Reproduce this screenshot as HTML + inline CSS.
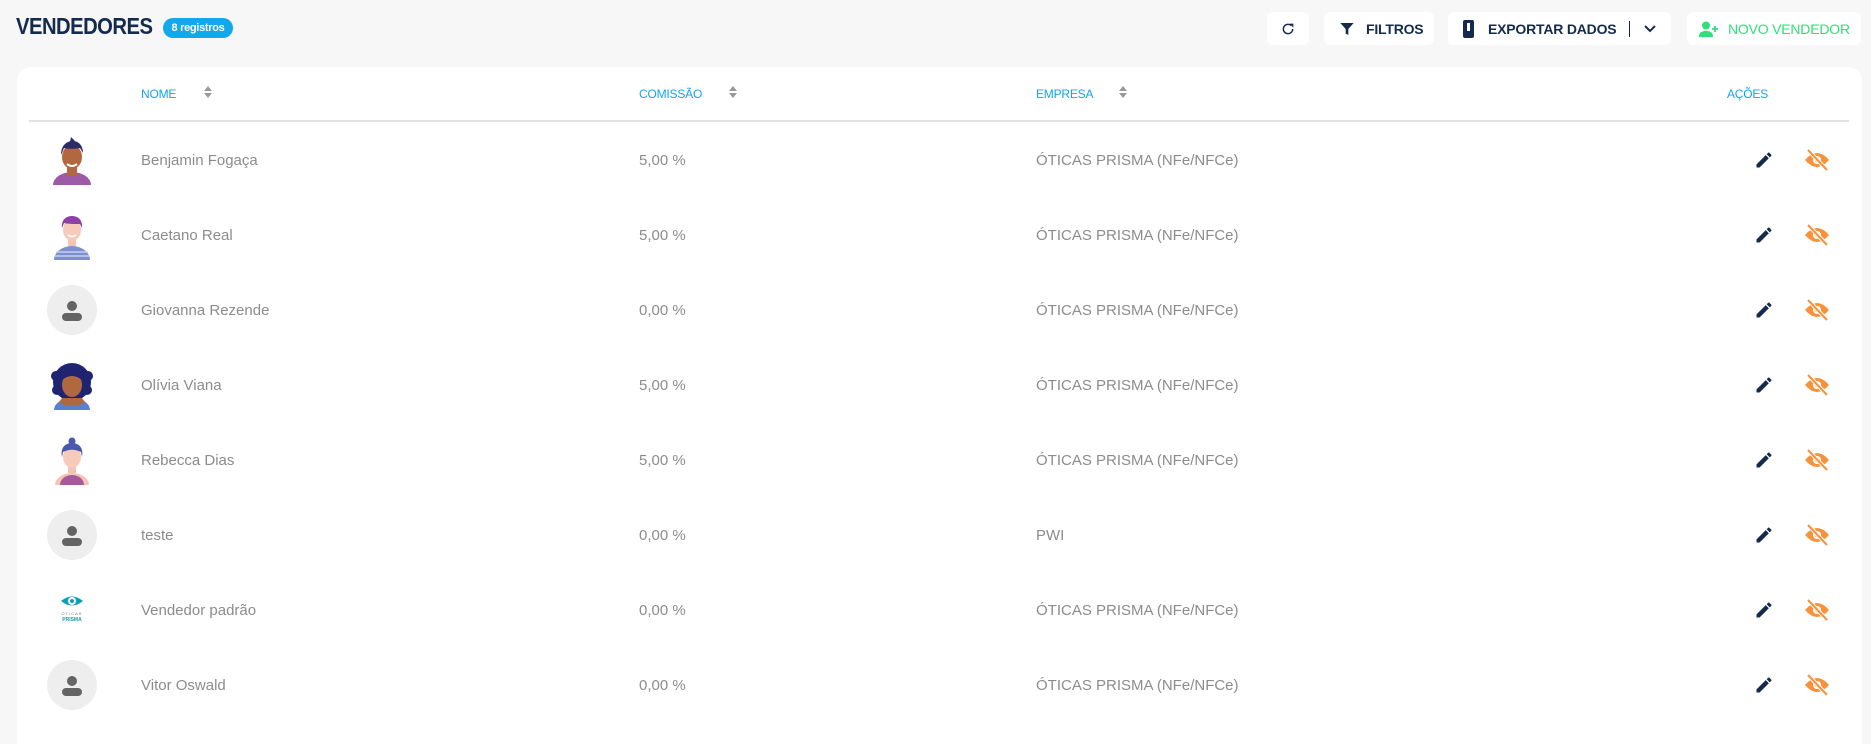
<!DOCTYPE html>
<html><head><meta charset="utf-8">
<style>
*{margin:0;padding:0;box-sizing:border-box}
html{width:1871px;height:744px;overflow:hidden}
body{width:1871px;height:744px;background:#f7f7f7;font-family:"Liberation Sans",sans-serif;position:relative;overflow:hidden}
.title{position:absolute;left:16px;top:13px;font-size:23px;font-weight:bold;color:#142b4d;letter-spacing:-0.6px;transform:scaleX(0.88);transform-origin:left top}
.badge{position:absolute;left:163px;top:18px;width:70px;height:20px;border-radius:10px;background:#11a8ec;color:#fff;font-size:11px;font-weight:bold;text-align:center;line-height:20px;letter-spacing:-0.3px}
.btn{position:absolute;top:12px;height:33px;background:#fff;border-radius:6px;display:flex;align-items:center;font-size:14px;font-weight:bold;color:#142b4d;letter-spacing:-0.2px}
.card{position:absolute;left:17px;top:67px;width:1845px;bottom:-30px;background:#fff;border-radius:14px}
.th{position:absolute;top:87px;font-size:12px;color:#14a4ea;letter-spacing:-0.2px}
.sort{position:absolute;top:85px}
.line{position:absolute;left:29px;top:120px;width:1820px;height:2px;background:#e2e2e2}
.row{position:absolute;left:0;width:1871px;height:75px}
.row .t{position:absolute;top:29px;font-size:15px;color:#8c8c8c}
.av{position:absolute;left:47px;top:12px;width:50px;height:50px}
.ed{position:absolute;left:1754px;top:27px}
.ey{position:absolute;left:1804px;top:26px}
</style></head><body>
<div class="title">VENDEDORES</div>
<div class="badge">8 registros</div>

<div class="btn" style="left:1267px;width:42px;justify-content:center">
<svg width="16" height="16" viewBox="0 0 24 24"><path d="M19 12a7 7 0 1 1-2.2-5.1" fill="none" stroke="#142b4d" stroke-width="2.2"/><path d="M14 4h6v6z" fill="#142b4d"/></svg></div>
<div class="btn" style="left:1324px;width:110px;padding-left:15px">
<svg width="16" height="16" viewBox="0 0 24 24" style="margin-right:11px"><path d="M2 3h20l-8 9v9l-4-2v-7z" fill="#142b4d"/></svg>FILTROS</div>
<div class="btn" style="left:1448px;width:223px;padding-left:15px">
<svg width="11" height="18" viewBox="0 0 11 18" style="margin-right:14px"><rect width="11" height="18" rx="2" fill="#142b4d"/><rect x="4" y="3" width="3" height="8" fill="#fff"/></svg>EXPORTAR DADOS<span style="display:inline-block;width:1px;height:16px;background:#142b4d;margin:0 13px 0 13px"></span>
<svg width="14" height="10" viewBox="0 0 14 10"><path d="M2 2l5 5 5-5" fill="none" stroke="#142b4d" stroke-width="2"/></svg></div>
<div class="btn" style="left:1687px;width:174px;padding-left:12px;color:#2fe07a;font-weight:normal">
<svg width="20" height="16" viewBox="0 0 20 16" style="margin-right:9px"><circle cx="7" cy="4.5" r="4" fill="#2fe07a"/><path d="M0 16c0-5 3-6 7-6s7 1 7 6z" fill="#2fe07a"/><path d="M16 5v6M13 8h6" stroke="#2fe07a" stroke-width="1.8"/></svg>NOVO VENDEDOR</div>

<div class="card"></div>
<div class="th" style="left:141px">NOME</div>
<div class="th" style="left:639px">COMISSÃO</div>
<div class="th" style="left:1036px">EMPRESA</div>
<div class="th" style="left:1727px">AÇÕES</div>
<svg class="sort" style="left:203px" width="10" height="14" viewBox="0 0 10 14"><path d="M1 6l4-5 4 5zM1 8l4 5 4-5z" fill="#9a9a9a"/></svg>
<svg class="sort" style="left:728px" width="10" height="14" viewBox="0 0 10 14"><path d="M1 6l4-5 4 5zM1 8l4 5 4-5z" fill="#9a9a9a"/></svg>
<svg class="sort" style="left:1118px" width="10" height="14" viewBox="0 0 10 14"><path d="M1 6l4-5 4 5zM1 8l4 5 4-5z" fill="#9a9a9a"/></svg>
<div class="line"></div>

<div class="row" style="top:123px">
<svg class="av" viewBox="0 0 50 50"><path d="M6 50a19 13 0 0 1 38 0z" fill="#9d5aa6"/><rect x="20" y="30" width="10" height="10" fill="#b3673f"/><ellipse cx="25" cy="22" rx="10" ry="12" fill="#b3673f"/><path d="M14 20c0-10 6-14 12-14s10 5 10 12l-3-5c-5 1-12 1-16 0z" fill="#2b2a6a"/><path d="M24 2l4 4-5 1z" fill="#2b2a6a"/><path d="M20 29q5 4 10 0" stroke="#fff" stroke-width="2" fill="none"/></svg>
<div class="t" style="left:141px">Benjamin Fogaça</div><div class="t" style="left:639px">5,00 %</div><div class="t" style="left:1036px">ÓTICAS PRISMA (NFe/NFCe)</div>
<svg class="ed" width="20" height="20" viewBox="0 0 24 24"><path d="M3 17.3V21h3.7L17.8 9.9l-3.7-3.7zM20.7 7c.4-.4.4-1 0-1.4l-2.3-2.3c-.4-.4-1-.4-1.4 0l-1.8 1.8 3.7 3.7z" fill="#142b4d"/></svg>
<svg class="ey" width="26" height="22" viewBox="0 0 26 22"><path d="M1 11q12-14 24 0q-12 14-24 0z" fill="#f7923b"/><circle cx="13" cy="11" r="4" fill="#fff"/><circle cx="13" cy="11" r="2.2" fill="#f7923b"/><path d="M4 1l19 20" stroke="#fff" stroke-width="4"/><path d="M4 1l19 20" stroke="#f7923b" stroke-width="2"/></svg>
</div>

<div class="row" style="top:198px">
<svg class="av" viewBox="0 0 50 50"><path d="M7 50a18 14 0 0 1 36 0z" fill="#7d8fd0"/><path d="M9 42h32M8 46h34" stroke="#c6d0f0" stroke-width="1.5"/><rect x="21" y="28" width="8" height="8" fill="#f4c2b0"/><ellipse cx="25" cy="20" rx="9" ry="11" fill="#f7cbbb"/><path d="M15 18c-1-9 5-12 10-12s11 3 10 12l-2-4c-5 0-12 0-16-1z" fill="#8f3fa6"/><path d="M21 25q4 3 8 0" stroke="#fff" stroke-width="1.5" fill="none"/></svg>
<div class="t" style="left:141px">Caetano Real</div><div class="t" style="left:639px">5,00 %</div><div class="t" style="left:1036px">ÓTICAS PRISMA (NFe/NFCe)</div>
<svg class="ed" width="20" height="20" viewBox="0 0 24 24"><path d="M3 17.3V21h3.7L17.8 9.9l-3.7-3.7zM20.7 7c.4-.4.4-1 0-1.4l-2.3-2.3c-.4-.4-1-.4-1.4 0l-1.8 1.8 3.7 3.7z" fill="#142b4d"/></svg>
<svg class="ey" width="26" height="22" viewBox="0 0 26 22"><path d="M1 11q12-14 24 0q-12 14-24 0z" fill="#f7923b"/><circle cx="13" cy="11" r="4" fill="#fff"/><circle cx="13" cy="11" r="2.2" fill="#f7923b"/><path d="M4 1l19 20" stroke="#fff" stroke-width="4"/><path d="M4 1l19 20" stroke="#f7923b" stroke-width="2"/></svg>
</div>

<div class="row" style="top:273px">
<svg class="av" viewBox="0 0 50 50"><circle cx="25" cy="25" r="25" fill="#eeeeee"/><circle cx="25" cy="21" r="5" fill="#646464"/><rect x="15" y="28" width="20" height="8" rx="4" fill="#646464"/></svg>
<div class="t" style="left:141px">Giovanna Rezende</div><div class="t" style="left:639px">0,00 %</div><div class="t" style="left:1036px">ÓTICAS PRISMA (NFe/NFCe)</div>
<svg class="ed" width="20" height="20" viewBox="0 0 24 24"><path d="M3 17.3V21h3.7L17.8 9.9l-3.7-3.7zM20.7 7c.4-.4.4-1 0-1.4l-2.3-2.3c-.4-.4-1-.4-1.4 0l-1.8 1.8 3.7 3.7z" fill="#142b4d"/></svg>
<svg class="ey" width="26" height="22" viewBox="0 0 26 22"><path d="M1 11q12-14 24 0q-12 14-24 0z" fill="#f7923b"/><circle cx="13" cy="11" r="4" fill="#fff"/><circle cx="13" cy="11" r="2.2" fill="#f7923b"/><path d="M4 1l19 20" stroke="#fff" stroke-width="4"/><path d="M4 1l19 20" stroke="#f7923b" stroke-width="2"/></svg>
</div>

<div class="row" style="top:348px">
<svg class="av" viewBox="0 0 50 50"><circle cx="25" cy="22" r="19" fill="#1f2370"/><circle cx="9" cy="16" r="5" fill="#1f2370"/><circle cx="41" cy="16" r="5" fill="#1f2370"/><circle cx="10" cy="30" r="5" fill="#1f2370"/><circle cx="40" cy="30" r="5" fill="#1f2370"/><path d="M7 50a18 12 0 0 1 36 0z" fill="#5d7ec8"/><path d="M12 42q13 8 26 0l-3-4h-20z" fill="#b0683e"/><ellipse cx="25" cy="25" rx="10" ry="12" fill="#b0683e"/><path d="M15 20q10-8 20 0q0-10-10-10t-10 10z" fill="#1f2370"/></svg>
<div class="t" style="left:141px">Olívia Viana</div><div class="t" style="left:639px">5,00 %</div><div class="t" style="left:1036px">ÓTICAS PRISMA (NFe/NFCe)</div>
<svg class="ed" width="20" height="20" viewBox="0 0 24 24"><path d="M3 17.3V21h3.7L17.8 9.9l-3.7-3.7zM20.7 7c.4-.4.4-1 0-1.4l-2.3-2.3c-.4-.4-1-.4-1.4 0l-1.8 1.8 3.7 3.7z" fill="#142b4d"/></svg>
<svg class="ey" width="26" height="22" viewBox="0 0 26 22"><path d="M1 11q12-14 24 0q-12 14-24 0z" fill="#f7923b"/><circle cx="13" cy="11" r="4" fill="#fff"/><circle cx="13" cy="11" r="2.2" fill="#f7923b"/><path d="M4 1l19 20" stroke="#fff" stroke-width="4"/><path d="M4 1l19 20" stroke="#f7923b" stroke-width="2"/></svg>
</div>

<div class="row" style="top:423px">
<svg class="av" viewBox="0 0 50 50"><path d="M8 50a17 12 0 0 1 34 0z" fill="#f6c3b4"/><path d="M13 50a12 10 0 0 1 24 0z" fill="#a35b9c"/><rect x="21" y="30" width="8" height="8" fill="#f4c2b0"/><ellipse cx="25" cy="22" rx="9" ry="11" fill="#f7cbbb"/><circle cx="25" cy="6" r="3.5" fill="#4b58ad"/><path d="M15 22c-2-10 4-14 10-14s12 4 10 14l-1-5c-6-3-12-3-18 0z" fill="#4b58ad"/></svg>
<div class="t" style="left:141px">Rebecca Dias</div><div class="t" style="left:639px">5,00 %</div><div class="t" style="left:1036px">ÓTICAS PRISMA (NFe/NFCe)</div>
<svg class="ed" width="20" height="20" viewBox="0 0 24 24"><path d="M3 17.3V21h3.7L17.8 9.9l-3.7-3.7zM20.7 7c.4-.4.4-1 0-1.4l-2.3-2.3c-.4-.4-1-.4-1.4 0l-1.8 1.8 3.7 3.7z" fill="#142b4d"/></svg>
<svg class="ey" width="26" height="22" viewBox="0 0 26 22"><path d="M1 11q12-14 24 0q-12 14-24 0z" fill="#f7923b"/><circle cx="13" cy="11" r="4" fill="#fff"/><circle cx="13" cy="11" r="2.2" fill="#f7923b"/><path d="M4 1l19 20" stroke="#fff" stroke-width="4"/><path d="M4 1l19 20" stroke="#f7923b" stroke-width="2"/></svg>
</div>

<div class="row" style="top:498px">
<svg class="av" viewBox="0 0 50 50"><circle cx="25" cy="25" r="25" fill="#eeeeee"/><circle cx="25" cy="21" r="5" fill="#646464"/><rect x="15" y="28" width="20" height="8" rx="4" fill="#646464"/></svg>
<div class="t" style="left:141px">teste</div><div class="t" style="left:639px">0,00 %</div><div class="t" style="left:1036px">PWI</div>
<svg class="ed" width="20" height="20" viewBox="0 0 24 24"><path d="M3 17.3V21h3.7L17.8 9.9l-3.7-3.7zM20.7 7c.4-.4.4-1 0-1.4l-2.3-2.3c-.4-.4-1-.4-1.4 0l-1.8 1.8 3.7 3.7z" fill="#142b4d"/></svg>
<svg class="ey" width="26" height="22" viewBox="0 0 26 22"><path d="M1 11q12-14 24 0q-12 14-24 0z" fill="#f7923b"/><circle cx="13" cy="11" r="4" fill="#fff"/><circle cx="13" cy="11" r="2.2" fill="#f7923b"/><path d="M4 1l19 20" stroke="#fff" stroke-width="4"/><path d="M4 1l19 20" stroke="#f7923b" stroke-width="2"/></svg>
</div>

<div class="row" style="top:573px">
<svg class="av" viewBox="0 0 50 50"><path d="M14 16q11-9 22 0q-11 9-22 0z" fill="#0e9fb5"/><circle cx="25" cy="16" r="4" fill="#fff"/><circle cx="25" cy="16" r="2" fill="#0e9fb5"/><text x="25" y="30" font-size="4" text-anchor="middle" fill="#777" font-family="Liberation Sans" letter-spacing="1">ÓTICAS</text><text x="25" y="36" font-size="5" text-anchor="middle" fill="#0e9fb5" font-weight="bold" font-family="Liberation Sans">PRISMA</text></svg>
<div class="t" style="left:141px">Vendedor padrão</div><div class="t" style="left:639px">0,00 %</div><div class="t" style="left:1036px">ÓTICAS PRISMA (NFe/NFCe)</div>
<svg class="ed" width="20" height="20" viewBox="0 0 24 24"><path d="M3 17.3V21h3.7L17.8 9.9l-3.7-3.7zM20.7 7c.4-.4.4-1 0-1.4l-2.3-2.3c-.4-.4-1-.4-1.4 0l-1.8 1.8 3.7 3.7z" fill="#142b4d"/></svg>
<svg class="ey" width="26" height="22" viewBox="0 0 26 22"><path d="M1 11q12-14 24 0q-12 14-24 0z" fill="#f7923b"/><circle cx="13" cy="11" r="4" fill="#fff"/><circle cx="13" cy="11" r="2.2" fill="#f7923b"/><path d="M4 1l19 20" stroke="#fff" stroke-width="4"/><path d="M4 1l19 20" stroke="#f7923b" stroke-width="2"/></svg>
</div>

<div class="row" style="top:648px">
<svg class="av" viewBox="0 0 50 50"><circle cx="25" cy="25" r="25" fill="#eeeeee"/><circle cx="25" cy="21" r="5" fill="#646464"/><rect x="15" y="28" width="20" height="8" rx="4" fill="#646464"/></svg>
<div class="t" style="left:141px">Vitor Oswald</div><div class="t" style="left:639px">0,00 %</div><div class="t" style="left:1036px">ÓTICAS PRISMA (NFe/NFCe)</div>
<svg class="ed" width="20" height="20" viewBox="0 0 24 24"><path d="M3 17.3V21h3.7L17.8 9.9l-3.7-3.7zM20.7 7c.4-.4.4-1 0-1.4l-2.3-2.3c-.4-.4-1-.4-1.4 0l-1.8 1.8 3.7 3.7z" fill="#142b4d"/></svg>
<svg class="ey" width="26" height="22" viewBox="0 0 26 22"><path d="M1 11q12-14 24 0q-12 14-24 0z" fill="#f7923b"/><circle cx="13" cy="11" r="4" fill="#fff"/><circle cx="13" cy="11" r="2.2" fill="#f7923b"/><path d="M4 1l19 20" stroke="#fff" stroke-width="4"/><path d="M4 1l19 20" stroke="#f7923b" stroke-width="2"/></svg>
</div>
</body></html>
